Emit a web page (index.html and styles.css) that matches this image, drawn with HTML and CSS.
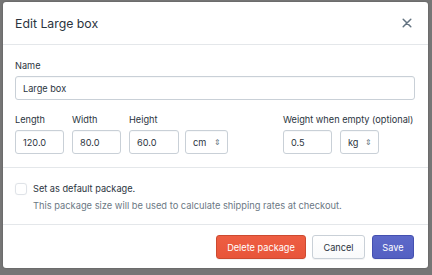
FILE: index.html
```html
<!DOCTYPE html>
<html>
<head>
<meta charset="utf-8">
<link rel="stylesheet" href="styles.css">
</head>
<body>
<div class="modal">
  <div class="modal-header">
    <h2 class="title">Edit Large box</h2>
    <button class="close" aria-label="Close">
      <svg width="10" height="10" viewBox="0 0 10 10"><path d="M1.2 1.2L8.8 8.8M8.8 1.2L1.2 8.8" stroke="#637381" stroke-width="1.5" stroke-linecap="round"/></svg>
    </button>
  </div>
  <div class="section">
    <label class="label">Name</label>
    <div class="input wide">Large box</div>
    <div class="dims">
      <div class="field">
        <label class="label">Length</label>
        <div class="input num">120.0</div>
      </div>
      <div class="field">
        <label class="label">Width</label>
        <div class="input num">80.0</div>
      </div>
      <div class="field">
        <label class="label">Height</label>
        <div class="field-row">
          <div class="input num h">60.0</div>
          <div class="input select cm">cm <span class="arrows">⇕</span></div>
        </div>
      </div>
      <div class="field weight">
        <label class="label">Weight when empty (optional)</label>
        <div class="field-row">
          <div class="input num">0.5</div>
          <div class="input select kg">kg <span class="arrows">⇕</span></div>
        </div>
      </div>
    </div>
  </div>
  <div class="section two">
    <div class="check-row">
      <span class="checkbox"></span>
      <div>
        <div class="check-label">Set as default package.</div>
        <div class="help">This package size will be used to calculate shipping rates at checkout.</div>
      </div>
    </div>
  </div>
  <div class="footer">
    <button class="btn danger">Delete package</button>
    <button class="btn cancel">Cancel</button>
    <button class="btn primary">Save</button>
  </div>
</div>
</body>
</html>
```
FILE: styles.css
```css
* { box-sizing: border-box; }
html, body { margin: 0; padding: 0; }
body {
  width: 432px;
  height: 275px;
  overflow: hidden;
  background: #767676;
  font-family: Inter, "Liberation Sans", sans-serif;
  color: #2b343e;
  padding: 2px 4px 0 3px;
}
.modal {
  background: #fff;
  border-radius: 3px;
  height: 266px;
  display: flex;
  flex-direction: column;
  box-shadow: 0 0 2px rgba(0,0,0,0.3);
}
.modal-header {
  height: 43px;
  flex: none;
  display: flex;
  align-items: center;
  justify-content: space-between;
  padding: 0 15px 0 12px;
  border-bottom: 1px solid #e4e7ea;
}
.title {
  margin: 0;
  font-size: 12.3px;
  font-weight: 400;
}
.close {
  border: 0;
  background: none;
  padding: 0;
  width: 12px;
  height: 12px;
  display: flex;
  align-items: center;
  justify-content: center;
}
.section {
  flex: none;
  padding: 15px 13px 13px 12px;
  border-bottom: 1px solid #e4e7ea;
}
.label {
  display: block;
  font-size: 9.2px;
  line-height: 12px;
  margin-bottom: 4px;
  white-space: nowrap;
}
.input {
  height: 24px;
  border: 1px solid #c9d0d7;
  border-radius: 3px;
  box-shadow: inset 0 1px 0 0 rgba(99,115,129,0.05);
  font-size: 9.2px;
  display: flex;
  align-items: center;
  padding: 0 7px;
}
.wide { width: 100%; }
.dims {
  display: flex;
  margin-top: 14px;
}
.field { margin-right: 8px; }
.field .input.num { width: 49px; }
.field .input.h { width: 50px; }
.field-row { display: flex; gap: 6px; }
.select { justify-content: space-between; padding-right: 6px; }
.cm { width: 43px; }
.kg { width: 39px; margin-left: 2px; }
.arrows { font-size: 8px; color: #637381; }
.weight { margin-left: 47px; margin-right: 0; }
.section.two {
  padding: 15px 12px 0 12px;
  height: 57px;
}
.check-row { display: flex; align-items: flex-start; }
.checkbox {
  width: 12px;
  height: 12px;
  border: 1px solid #dfe3e8;
  border-radius: 3px;
  box-shadow: 0 0 1px rgba(0,0,0,0.08);
  margin-right: 6px;
  flex: none;
}
.check-label { font-size: 9.2px; line-height: 12px; }
.help { font-size: 9.3px; line-height: 12px; color: #6b7884; margin-top: 5px; white-space: nowrap; }
.footer {
  flex: 1;
  display: flex;
  justify-content: flex-end;
  align-items: flex-start;
  gap: 6px;
  padding: 10px 14px 0;
}
.btn {
  height: 24px;
  border-radius: 3px;
  border: 1px solid #c9d0d7;
  background: linear-gradient(#fff, #f9fafb);
  font-family: Inter, "Liberation Sans", sans-serif;
  font-size: 9.2px;
  color: #2b343e;
  padding: 0;
  box-shadow: 0 1px 0 rgba(22,29,37,0.05);
}
.danger {
  width: 90px;
  background: linear-gradient(#ee5e42, #e8553a);
  border-color: #cc4a30;
  color: #fff;
}
.cancel { width: 53px; margin-right: 1px; }
.primary {
  width: 42px;
  background: linear-gradient(#5d69c9, #5460c2);
  border-color: #4450b0;
  color: #fff;
}
```
